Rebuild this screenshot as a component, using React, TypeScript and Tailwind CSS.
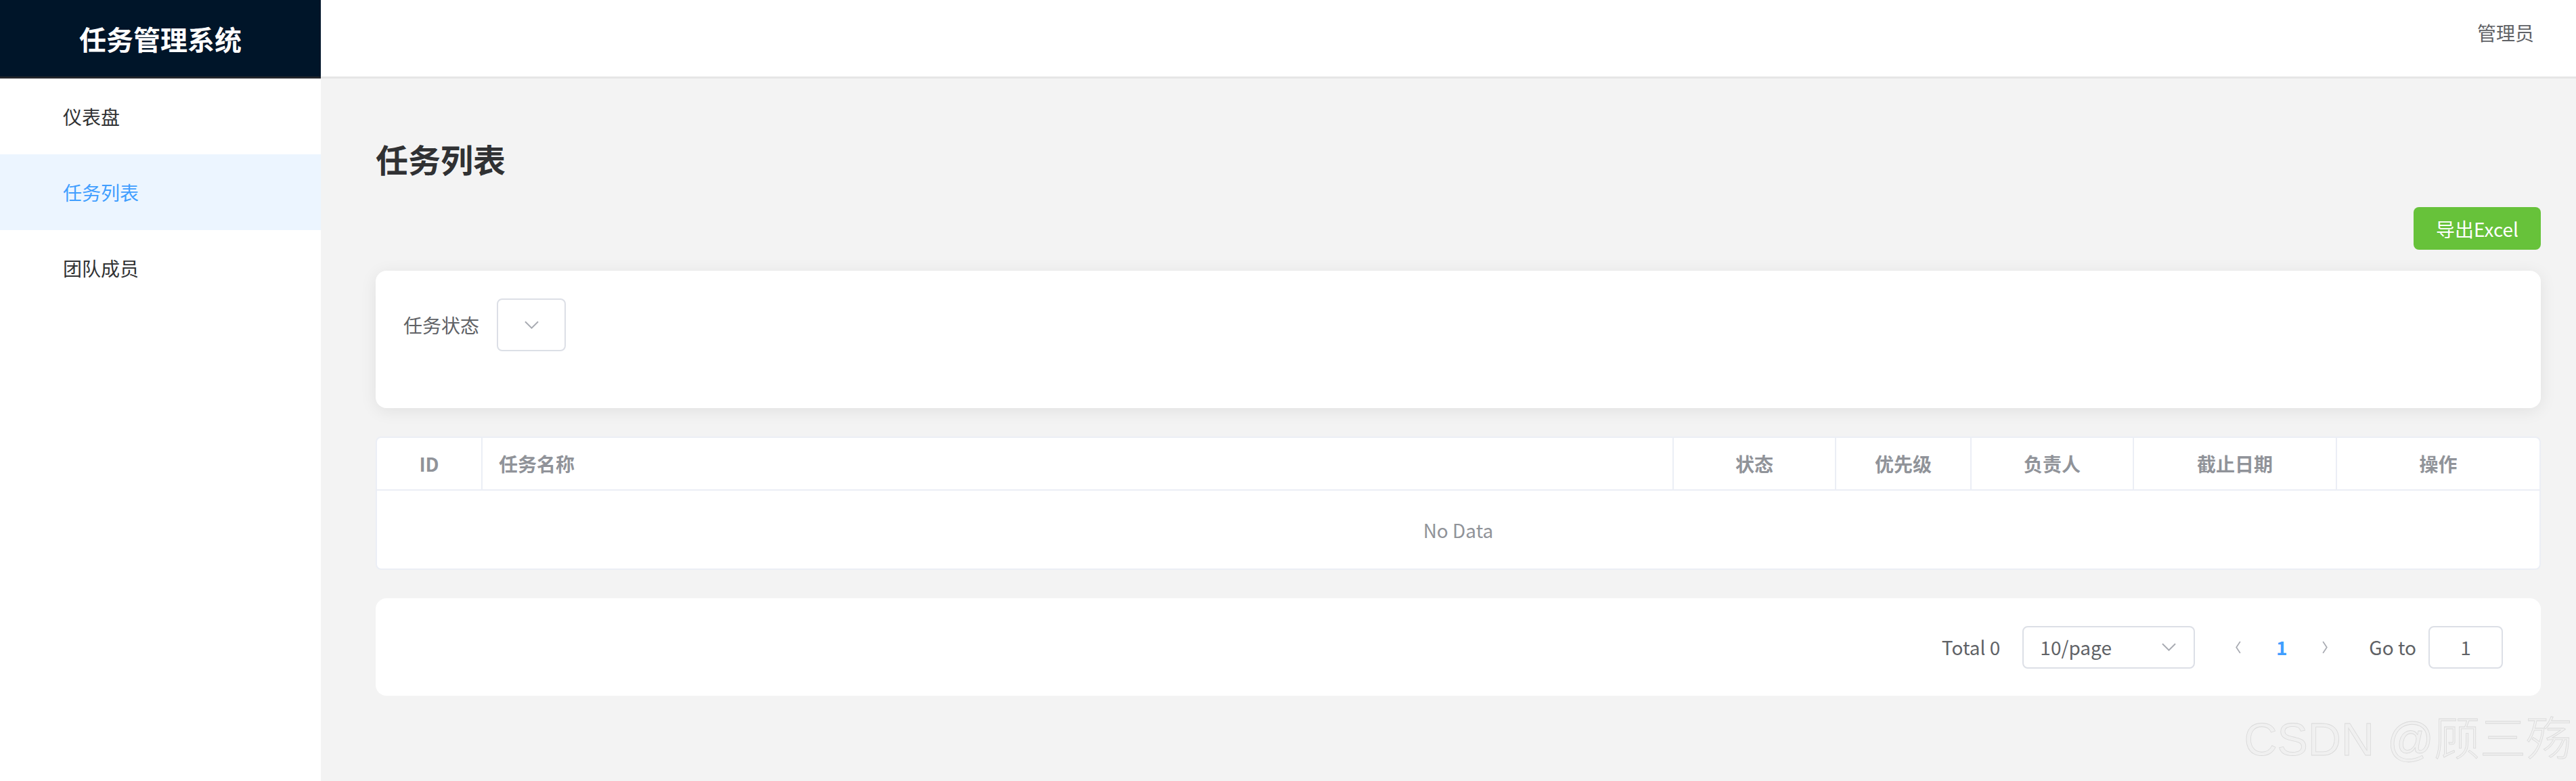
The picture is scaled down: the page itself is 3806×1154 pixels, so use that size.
import type { ReactNode } from 'react';

const menuItems = [
  { label: '仪表盘', active: false },
  { label: '任务列表', active: true },
  { label: '团队成员', active: false },
];

const columns = [
  { label: 'ID', align: 'center' },
  { label: '任务名称', align: 'left' },
  { label: '状态', align: 'center' },
  { label: '优先级', align: 'center' },
  { label: '负责人', align: 'center' },
  { label: '截止日期', align: 'center' },
  { label: '操作', align: 'center' },
];

const ChevronDown = ({ className }: { className?: string }) => (
  <svg viewBox="0 0 22 12" className={className} fill="none" stroke="currentColor" strokeWidth="2">
    <polyline points="1,1 11,11 21,1" />
  </svg>
);

const Arrow = ({ dir }: { dir: 'left' | 'right' }) => (
  <svg viewBox="0 0 10 20" className="h-[19px] w-[10px] text-[#a8abb2]" fill="none" stroke="currentColor" strokeWidth="1.8">
    <polyline points={dir === 'left' ? '8,1 2,10 8,19' : '2,1 8,10 2,19'} />
  </svg>
);

const Card = ({ children, className = '' }: { children: ReactNode; className?: string }) => (
  <div className={`rounded-[16px] bg-white ${className}`}>{children}</div>
);

export default function App() {
  return (
    <div className="relative flex h-[1154px] w-full overflow-hidden font-['Noto_Sans_CJK_SC',sans-serif] text-[28px]">
      <aside className="flex w-[474px] shrink-0 flex-col bg-white">
        <div className="flex h-[116px] items-center justify-center border-b-[3px] border-[#23262b] bg-[#001529] text-[40px] font-semibold text-white">
          任务管理系统
        </div>
        <nav>
          {menuItems.map((item) => (
            <div
              key={item.label}
              className={`flex h-[112px] items-center pl-[93px] ${
                item.active ? 'bg-[#ecf5ff] text-[#409eff]' : 'text-[#303133]'
              }`}
            >
              {item.label}
            </div>
          ))}
        </nav>
      </aside>

      <div className="flex min-w-0 flex-1 flex-col bg-[#f3f3f3]">
        <header className="flex h-[116px] shrink-0 items-start justify-end border-b-[3px] border-[#e6e6e6] bg-white pr-[62px] pt-[28px]">
          <span className="leading-[40px] text-[#606266]">管理员</span>
        </header>

        <main className="flex flex-col pl-[81px] pr-[52px] pt-[82px]">
          <h1 className="text-[48px] font-bold leading-[72px] text-[#303133]">任务列表</h1>

          <div className="mt-[36px] flex justify-end">
            <button
              type="button"
              className="flex h-[63px] w-[188px] items-center justify-center rounded-[8px] bg-[#67c23a] text-white"
            >
              导出Excel
            </button>
          </div>

          <Card className="mt-[31px] px-[41px] pb-[84px] pt-[41px] shadow-[0_4px_24px_rgba(0,0,0,0.08)]">
            <div className="flex items-center">
              <span className="mr-[26px] text-[#606266]">任务状态</span>
              <div className="flex h-[78px] w-[102px] items-center justify-center rounded-[8px] border-2 border-[#dcdfe6]">
                <ChevronDown className="h-[12px] w-[21px] text-[#a8abb2]" />
              </div>
            </div>
          </Card>

          <div className="mt-[42px] overflow-hidden rounded-[8px] border-2 border-[#ebeef5] bg-white">
            <div className="grid h-[78px] grid-cols-[156px_1760px_240px_200px_240px_300px_1fr] border-b-2 border-[#ebeef5]">
              {columns.map((col, i) => (
                <div
                  key={col.label}
                  className={`flex items-center font-bold text-[#909399] ${
                    col.align === 'center' ? 'justify-center' : 'pl-[24px]'
                  } ${i < columns.length - 1 ? 'border-r-2 border-[#ebeef5]' : ''}`}
                >
                  {col.label}
                </div>
              ))}
            </div>
            <div className="flex h-[115px] items-center justify-center text-[#909399]">No Data</div>
          </div>

          <Card className="mt-[42px] flex h-[144px] items-center justify-end pr-[56px] text-[#606266]">
            <span>Total 0</span>
            <div className="ml-[33px] flex h-[63px] w-[255px] items-center justify-between rounded-[8px] border-2 border-[#dcdfe6] pl-[24px] pr-[26px]">
              <span>10/page</span>
              <ChevronDown className="h-[12px] w-[21px] text-[#a8abb2]" />
            </div>
            <div className="ml-[32px] flex items-center">
              <span className="flex h-[63px] w-[64px] items-center justify-center">
                <Arrow dir="left" />
              </span>
              <span className="flex h-[63px] w-[64px] items-center justify-center font-bold text-[#409eff]">1</span>
              <span className="flex h-[63px] w-[64px] items-center justify-center">
                <Arrow dir="right" />
              </span>
            </div>
            <span className="ml-[33px]">Go to</span>
            <div className="ml-[18px] flex h-[63px] w-[110px] items-center justify-center rounded-[8px] border-2 border-[#dcdfe6]">
              1
            </div>
          </Card>
        </main>
      </div>

      <div className="pointer-events-none absolute right-[6px] top-[1055px] whitespace-nowrap font-['Liberation_Sans','Noto_Sans_CJK_SC',sans-serif] text-[68px] font-light leading-[75px] text-[#f0f0f0] [-webkit-text-stroke:0.8px_#d9d9d9]">
        CSDN @顾三殇
      </div>
    </div>
  );
}
